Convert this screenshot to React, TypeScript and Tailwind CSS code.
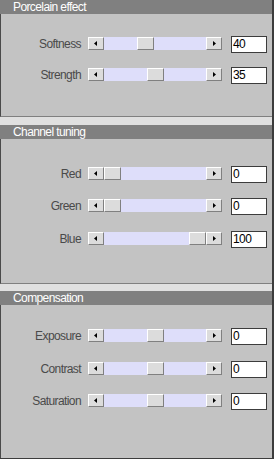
import React from 'react'

type Row = { label: string; value: string; pos: number; top: number }

type Section = { title: string; bodyH: number; rows: Row[] }

const sections: Section[] = [
  {
    title: 'Porcelain effect',
    bodyH: 103,
    rows: [
      { label: 'Softness', value: '40', pos: 33, top: 22 },
      { label: 'Strength', value: '35', pos: 43, top: 14 },
    ],
  },
  {
    title: 'Channel tuning',
    bodyH: 145,
    rows: [
      { label: 'Red', value: '0', pos: 0, top: 27 },
      { label: 'Green', value: '0', pos: 0, top: 15 },
      { label: 'Blue', value: '100', pos: 85, top: 16 },
    ],
  },
  {
    title: 'Compensation',
    bodyH: 153,
    rows: [
      { label: 'Exposure', value: '0', pos: 43, top: 23 },
      { label: 'Contrast', value: '0', pos: 43, top: 16 },
      { label: 'Saturation', value: '0', pos: 43, top: 15 },
    ],
  },
]

function ArrowButton({ dir }: { dir: 'left' | 'right' }) {
  return (
    <div className="w-[16px] h-[13px] shrink-0 bg-[#dcdcdc] border border-t-white border-l-white border-b-[#808080] border-r-[#808080] flex items-center justify-center">
      <svg width="4" height="5" viewBox="0 0 4 5">
        {dir === 'left' ? (
          <polygon points="3,0 3,5 0,2.5" fill="#000" />
        ) : (
          <polygon points="1,0 1,5 4,2.5" fill="#000" />
        )}
      </svg>
    </div>
  )
}

function Slider({ pos }: { pos: number }) {
  return (
    <div className="flex w-[134px] h-[13px] mt-px">
      <ArrowButton dir="left" />
      <div className="relative w-[102px] h-[13px] bg-[#dedefa]">
        <div
          className="absolute top-0 w-[17px] h-[13px] bg-[#dcdcdc] border border-t-white border-l-white border-b-[#808080] border-r-[#808080]"
          style={{ left: pos }}
        />
      </div>
      <ArrowButton dir="right" />
    </div>
  )
}

export default function App() {
  return (
    <div
      className="w-[274px] h-[459px] bg-[#e0e0e0] border-r-2 border-b border-[#3c3c3c] flex flex-col overflow-hidden text-[12px] tracking-[-0.6px]"
      style={{ fontFamily: '"Liberation Sans", Arial, sans-serif' }}
    >
      {sections.map((s, i) => (
        <div key={s.title} className={i === 0 ? '' : i === 1 ? 'mt-[8px]' : 'mt-[7px]'}>
          {/* Header */}
          <div className="h-[14px] leading-[14px] bg-[#808080] text-white pl-[13px]">{s.title}</div>

          {/* Body */}
          <div
            className={`bg-[#c3c3c3] border-l border-[#4a4a4a] border-b-[#808080] ${i === 2 ? 'grow' : 'border-b'} flex flex-col`}
            style={{ height: s.bodyH }}
          >
            {s.rows.map(r => (
              <div key={r.label} className="flex items-start" style={{ marginTop: r.top }}>
                <div className="w-[80px] pr-[0px] text-right text-[#4a4a4a] leading-[17px] h-[17px]">{r.label}</div>
                <div className="ml-[7px]">
                  <Slider pos={r.pos} />
                </div>
                <div className="ml-[9px] w-[36px] h-[17px] bg-white border border-[#3c3c3c] text-black leading-[15px] pl-[1px]">
                  {r.value}
                </div>
              </div>
            ))}
          </div>
        </div>
      ))}
    </div>
  )
}
